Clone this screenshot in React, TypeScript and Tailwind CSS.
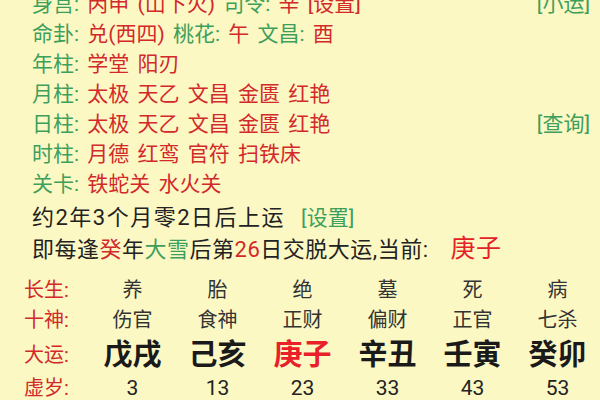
import React from 'react';

const G = 'text-[#3c9f5c]';
const R = 'text-[#d2292b]';

type Seg = [string, string];

function Line({ segs, right }: { segs: Seg[]; right?: string }) {
  return (
    <div className="flex items-center justify-between pr-[10px] leading-[30px]">
      <div className="whitespace-pre [word-spacing:3px]">
        {segs.map(([t, c], i) => (
          <span key={i} className={c}>
            {t}
          </span>
        ))}
      </div>
      {right && <span className={G}>{right}</span>}
    </div>
  );
}

const shensha: { segs: Seg[]; right?: string }[] = [
  {
    segs: [
      ['身宫: ', G],
      ['丙申 (山下火) ', R],
      ['司令: ', G],
      ['辛 [设置]', R],
    ],
    right: '[小运]',
  },
  {
    segs: [
      ['命卦: ', G],
      ['兑(西四) ', R],
      ['桃花: ', G],
      ['午 ', R],
      ['文昌: ', G],
      ['酉', R],
    ],
  },
  { segs: [['年柱: ', G], ['学堂 阳刃', R]] },
  { segs: [['月柱: ', G], ['太极 天乙 文昌 金匮 红艳', R]] },
  { segs: [['日柱: ', G], ['太极 天乙 文昌 金匮 红艳', R]], right: '[查询]' },
  { segs: [['时柱: ', G], ['月德 红鸾 官符 扫铁床', R]] },
  { segs: [['关卡: ', G], ['铁蛇关 水火关', R]] },
];

const cols = [
  { cs: '养', ss: '伤官', dy: '戊戌', age: 3 },
  { cs: '胎', ss: '食神', dy: '己亥', age: 13 },
  { cs: '绝', ss: '正财', dy: '庚子', age: 23, cur: true },
  { cs: '墓', ss: '偏财', dy: '辛丑', age: 33 },
  { cs: '死', ss: '正官', dy: '壬寅', age: 43 },
  { cs: '病', ss: '七杀', dy: '癸卯', age: 53 },
];

export default function App() {
  return (
    <div
      className="w-[600px] h-[400px] overflow-hidden bg-[#fcf8c4] text-[20px] text-[#222]"
      style={{ fontFamily: 'Roboto, "Noto Sans CJK SC", sans-serif' }}
    >
      <div className="-mt-[11px] pl-[32px] text-[21px]">
        {shensha.map((l, i) => (
          <Line key={i} segs={l.segs} right={l.right} />
        ))}
        <div className="mt-[4px] leading-[30px] whitespace-pre">
          <span className="text-[22px] tracking-[1.5px]">约2年3个月零2日后上运</span>
          <span className={`${G} ml-[16px]`}>[设置]</span>
        </div>
        <div className="leading-[32px] whitespace-pre text-[22px] tracking-[0.5px]">
          即每逢<span className={R}>癸</span>年<span className={G}>大雪</span>后第
          <span className={R}>26</span>日交脱大运,当前:
          <span className="ml-[22px] text-[25px] text-[#e42227]">庚子</span>
        </div>
      </div>

      <div className="mt-[9px] pl-[24px] grid grid-cols-[66px_repeat(6,85px)] text-center">
        <div className={`text-left leading-[30px] ${R}`}>长生:</div>
        {cols.map((c) => (
          <div key={c.cs} className="leading-[30px] text-[#333]">
            {c.cs}
          </div>
        ))}
        <div className={`text-left leading-[30px] ${R}`}>十神:</div>
        {cols.map((c) => (
          <div key={c.ss} className="leading-[30px] text-[#333]">
            {c.ss}
          </div>
        ))}
        <div className={`text-left leading-[40px] ${R}`}>大运:</div>
        {cols.map((c) => (
          <div
            key={c.dy}
            className={`leading-[40px] text-[29px] font-bold ${c.cur ? 'text-[#e8202a]' : 'text-[#1a1a1a]'}`}
          >
            {c.dy}
          </div>
        ))}
        <div className={`text-left leading-[26px] ${R}`}>虚岁:</div>
        {cols.map((c) => (
          <div key={c.age} className="leading-[26px] text-[21px] text-[#222]">
            {c.age}
          </div>
        ))}
      </div>
    </div>
  );
}
